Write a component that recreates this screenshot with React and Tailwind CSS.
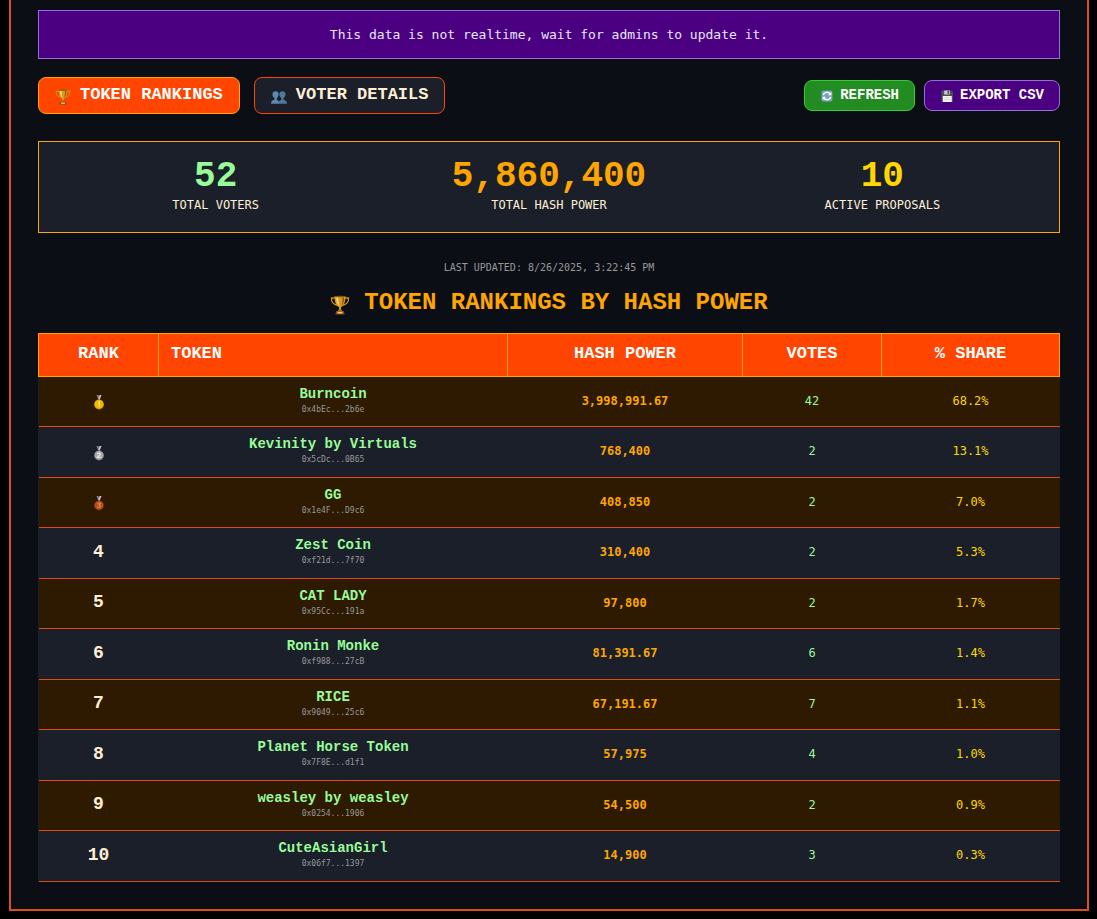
const tokens = [
    { name: 'Burncoin', address: '0x4bEc...2b6e', power: '3,998,991.67', votes: 42, share: '68.2%' },
    { name: 'Kevinity by Virtuals', address: '0x5cDc...0B65', power: '768,400', votes: 2, share: '13.1%' },
    { name: 'GG', address: '0x1e4F...D9c6', power: '408,850', votes: 2, share: '7.0%' },
    { name: 'Zest Coin', address: '0xf21d...7f70', power: '310,400', votes: 2, share: '5.3%' },
    { name: 'CAT LADY', address: '0x95Cc...191a', power: '97,800', votes: 2, share: '1.7%' },
    { name: 'Ronin Monke', address: '0xf988...27cB', power: '81,391.67', votes: 6, share: '1.4%' },
    { name: 'RICE', address: '0x9049...25c6', power: '67,191.67', votes: 7, share: '1.1%' },
    { name: 'Planet Horse Token', address: '0x7F8E...d1f1', power: '57,975', votes: 4, share: '1.0%' },
    { name: 'weasley by weasley', address: '0x0254...1906', power: '54,500', votes: 2, share: '0.9%' },
    { name: 'CuteAsianGirl', address: '0x06f7...1397', power: '14,900', votes: 3, share: '0.3%' },
];

const stats = [
    { value: '52', label: 'TOTAL VOTERS', color: 'text-[#98fb98]' },
    { value: '5,860,400', label: 'TOTAL HASH POWER', color: 'text-[#ffa500]' },
    { value: '10', label: 'ACTIVE PROPOSALS', color: 'text-[#ffd700]' },
];

const medals = [
    { fill: '#f5b800', edge: '#c98a00', shine: '#ffe98a' },
    { fill: '#a9a9ad', edge: '#77777c', shine: '#f0f0f2' },
    { fill: '#b4501a', edge: '#7d3008', shine: '#e08a4c' },
];

function TrophyIcon({ className }) {
    return (
        <svg viewBox="0 0 20 20" className={className} aria-hidden="true">
            <path d="M5.500 3H1.500c-.3 3.800 2 6.800 6 7.300M14.500 3h4c.3 3.800-2 6.800-6 7.300" fill="none" stroke="#c98d1c" strokeWidth="1.400" />
            <path d="M4.500 1.200h11c0 5.500-1.500 9.500-4.500 11v3.300H9v-3.300C6 10.700 4.500 6.700 4.500 1.200z" fill="#d99a1e" />
            <path d="M6.300 2.500h2c0 4 .4 6.500 1.300 8.500-2.300-1.200-3.300-4.500-3.300-8.500z" fill="#ffe08a" />
            <path d="M12.500 2.500h1.600c-.1 4-.8 7-2.600 8.200.8-2.200 1-4.700 1-8.200z" fill="#8a5510" />
            <path d="M8.500 14.500h3l1 2h-5z" fill="#a86a14" />
            <path d="M6.200 16h7.600l.9 3.500H5.300z" fill="#8a4a1a" />
            <path d="M7.500 16.800h5v1.700h-5z" fill="#f5c860" />
            <ellipse cx="10" cy="1.500" rx="5.500" ry=".8" fill="#8a5510" />
        </svg>
    );
}

function VotersIcon({ className }) {
    return (
        <svg viewBox="0 0 14 14" className={className} aria-hidden="true">
            <path d="M0 13c0-2.300 1-3.200 3-3.600V8C1.800 7.200 1.300 6 1.300 4.700 1.300 2.900 2.300 2 4 2s2.700.9 2.700 2.700C6.700 6 6.200 7.200 5 8v1.400c1.500.3 2.300 1.400 2.300 3.600z" fill="#5f88b0" />
            <path d="M6.700 13c0-2.300 1-3.200 2.300-3.600V8C7.800 7.200 7.300 6 7.300 4.700 7.300 2.900 8.300 2 10 2s2.700.9 2.700 2.700c0 1.300-.5 2.500-1.700 3.300v1.400c2 .4 3 1.300 3 3.600z" fill="#4f789f" />
        </svg>
    );
}

function RefreshIcon({ className }) {
    return (
        <svg viewBox="0 0 14 14" className={className} aria-hidden="true">
            <rect x="1.500" y="1.500" width="11" height="11" rx="2" fill="#7ba0c4" />
            <path d="M3.300 6.200C3.800 3.200 8 2.200 10 4.700M10.700 7.800C10.200 10.800 6 11.800 4 9.300" fill="none" stroke="#fff" strokeWidth="1.500" />
            <path d="M11.400 3v3.300H8zM2.600 11V7.700H6z" fill="#fff" />
        </svg>
    );
}

function FloppyIcon({ className }) {
    return (
        <svg viewBox="0 0 14 14" className={className} aria-hidden="true">
            <path d="M1.500 1.500h10l1.500 1.500V13h-11.500z" fill="#4b4f54" />
            <path d="M4.200 1.500h5.600v4H4.200z" fill="#c9ccd0" />
            <path d="M7.600 2h1.300v2.700H7.600z" fill="#34373b" />
            <path d="M2.800 7h9v6h-9z" fill="#f4f4f4" />
            <path d="M4 8.700h6.500M4 10.600h6.500" stroke="#c5c7ca" strokeWidth=".6" />
        </svg>
    );
}

function Medal({ place }) {
    const { fill, edge, shine } = medals[place - 1];

    return (
        <svg viewBox="0 0 12 16" className="mt-1 inline-block h-4 w-3" role="img" aria-label={`Rank ${place}`}>
            <path d="M3.500 1h2L6.500 5 5.500 6z" fill="#8f7fb0" />
            <path d="M8.500 1h-2L5.500 5 6.500 6z" fill="#d9c4d0" />
            <circle cx="6" cy="10.500" r="4.900" fill={edge} />
            <circle cx="6" cy="10.300" r="4.300" fill={fill} />
            {place === 1 && <path d="M5.200 8.900L6.300 8v4.600" fill="none" stroke={shine} strokeWidth="1.200" />}
            {place === 2 && <path d="M4.400 9c.6-1.500 3.200-1.100 2.800.5-.2 1-1.900 1.700-2.700 2.800h3.200" fill="none" stroke={shine} strokeWidth="1.100" />}
            {place === 3 && <path d="M4.500 8.200h2.900L6 9.800c2.200.2 1.700 2.800-.2 2.700-.6 0-1.100-.2-1.500-.6" fill="none" stroke={shine} strokeWidth="1.100" />}
        </svg>
    );
}

export default function App() {
    return (
        <div className="min-h-screen bg-black pr-2 pb-2 pl-[9px] font-['DejaVu_Sans_Mono',monospace] text-[#ffefd5]">
            <main className="border-x-2 border-b-2 border-[#d9501e] bg-[#0b0e15] px-[27px] pt-[10px] pb-[27px]">
                <div className="border border-[#9370db] bg-[#4b0082] py-[14px] text-center text-[13px] leading-[19px] text-[#e6e6fa]">
                    This data is not realtime, wait for admins to update it.
                </div>

                <div className="mt-[18px] flex flex-wrap items-center justify-between gap-3 font-['Liberation_Mono',monospace] font-bold">
                    <div className="flex gap-[14px]">
                        <button className="flex h-[37px] items-center gap-[9px] rounded-lg border border-[#ffa500] bg-[#ff4500] px-4 pb-[2px] text-[17px] text-white">
                            <TrophyIcon className="mt-1 size-4" />
                            TOKEN RANKINGS
                        </button>
                        <button className="flex h-[37px] items-center gap-[9px] rounded-lg border border-[#ff4500] bg-[#1a1f2a] px-4 pb-[2px] text-[17px]">
                            <VotersIcon className="mt-1 size-4" />
                            VOTER DETAILS
                        </button>
                    </div>
                    <div className="flex gap-[9px]">
                        <button className="flex h-[31px] items-center gap-[6px] rounded-lg border border-[#32cd32] bg-[#228b22] px-[15px] text-[14px] text-white">
                            <RefreshIcon className="size-[14px]" />
                            REFRESH
                        </button>
                        <button className="flex h-[31px] items-center gap-[6px] rounded-lg border border-[#9370db] bg-[#4b0082] px-[15px] text-[14px] text-white">
                            <FloppyIcon className="size-[14px]" />
                            EXPORT CSV
                        </button>
                    </div>
                </div>

                <section className="mt-[27px] grid grid-cols-3 gap-5 border border-[#ffa500] bg-[#1a1f2a] px-5 py-[17px] text-center">
                    {stats.map((stat) => (
                        <div key={stat.label}>
                            <div className={`font-['Liberation_Mono',monospace] text-[36px] leading-9 font-bold ${stat.color}`}>
                                {stat.value}
                            </div>
                            <div className="text-[12px] leading-5">{stat.label}</div>
                        </div>
                    ))}
                </section>

                <p className="mt-[27px] text-center text-[10px] leading-4 text-[#999999]">
                    LAST UPDATED: 8/26/2025, 3:22:45 PM
                </p>

                <h2 className="mt-[11px] flex items-center justify-center gap-[14px] font-['Liberation_Mono',monospace] text-[24px] leading-8 font-bold text-[#ffa500]">
                    <TrophyIcon className="mt-1 size-5" />
                    TOKEN RANKINGS BY HASH POWER
                </h2>

                <table className="mt-[14px] w-full table-fixed border-collapse bg-[#1a1f2a] text-center text-[12px]">
                    <thead>
                        <tr className="h-[43px] bg-[#ff4500] font-['Liberation_Mono',monospace] text-[17px] text-white *:border *:border-[#ffa500] *:pb-[2px]">
                            <th className="w-[120px]">RANK</th>
                            <th className="w-[349px] px-3 text-left">TOKEN</th>
                            <th className="w-[235px]">HASH POWER</th>
                            <th className="w-[139px]">VOTES</th>
                            <th>% SHARE</th>
                        </tr>
                    </thead>
                    <tbody>
                        {tokens.map((token, i) => (
                            <tr
                                key={token.address}
                                className="border-b border-[#e04a14] *:pb-[2px] odd:h-[50px] odd:bg-[#2d1a00] even:h-[51px]"
                            >
                                <td className="font-['Liberation_Mono',monospace] text-[18px] font-bold">
                                    {i < 3 ? <Medal place={i + 1} /> : i + 1}
                                </td>
                                <td>
                                    <div className="pt-[2px] font-['Liberation_Mono',monospace] text-[14px] leading-4 font-bold text-[#98fb98]">
                                        {token.name}
                                    </div>
                                    <div className="text-[8px] leading-4 text-[#999999]">{token.address}</div>
                                </td>
                                <td className="font-bold text-[#ffa500]">{token.power}</td>
                                <td className="text-[#98fb98]">{token.votes}</td>
                                <td className="text-[#ffd700]">{token.share}</td>
                            </tr>
                        ))}
                    </tbody>
                </table>
            </main>
        </div>
    );
}
